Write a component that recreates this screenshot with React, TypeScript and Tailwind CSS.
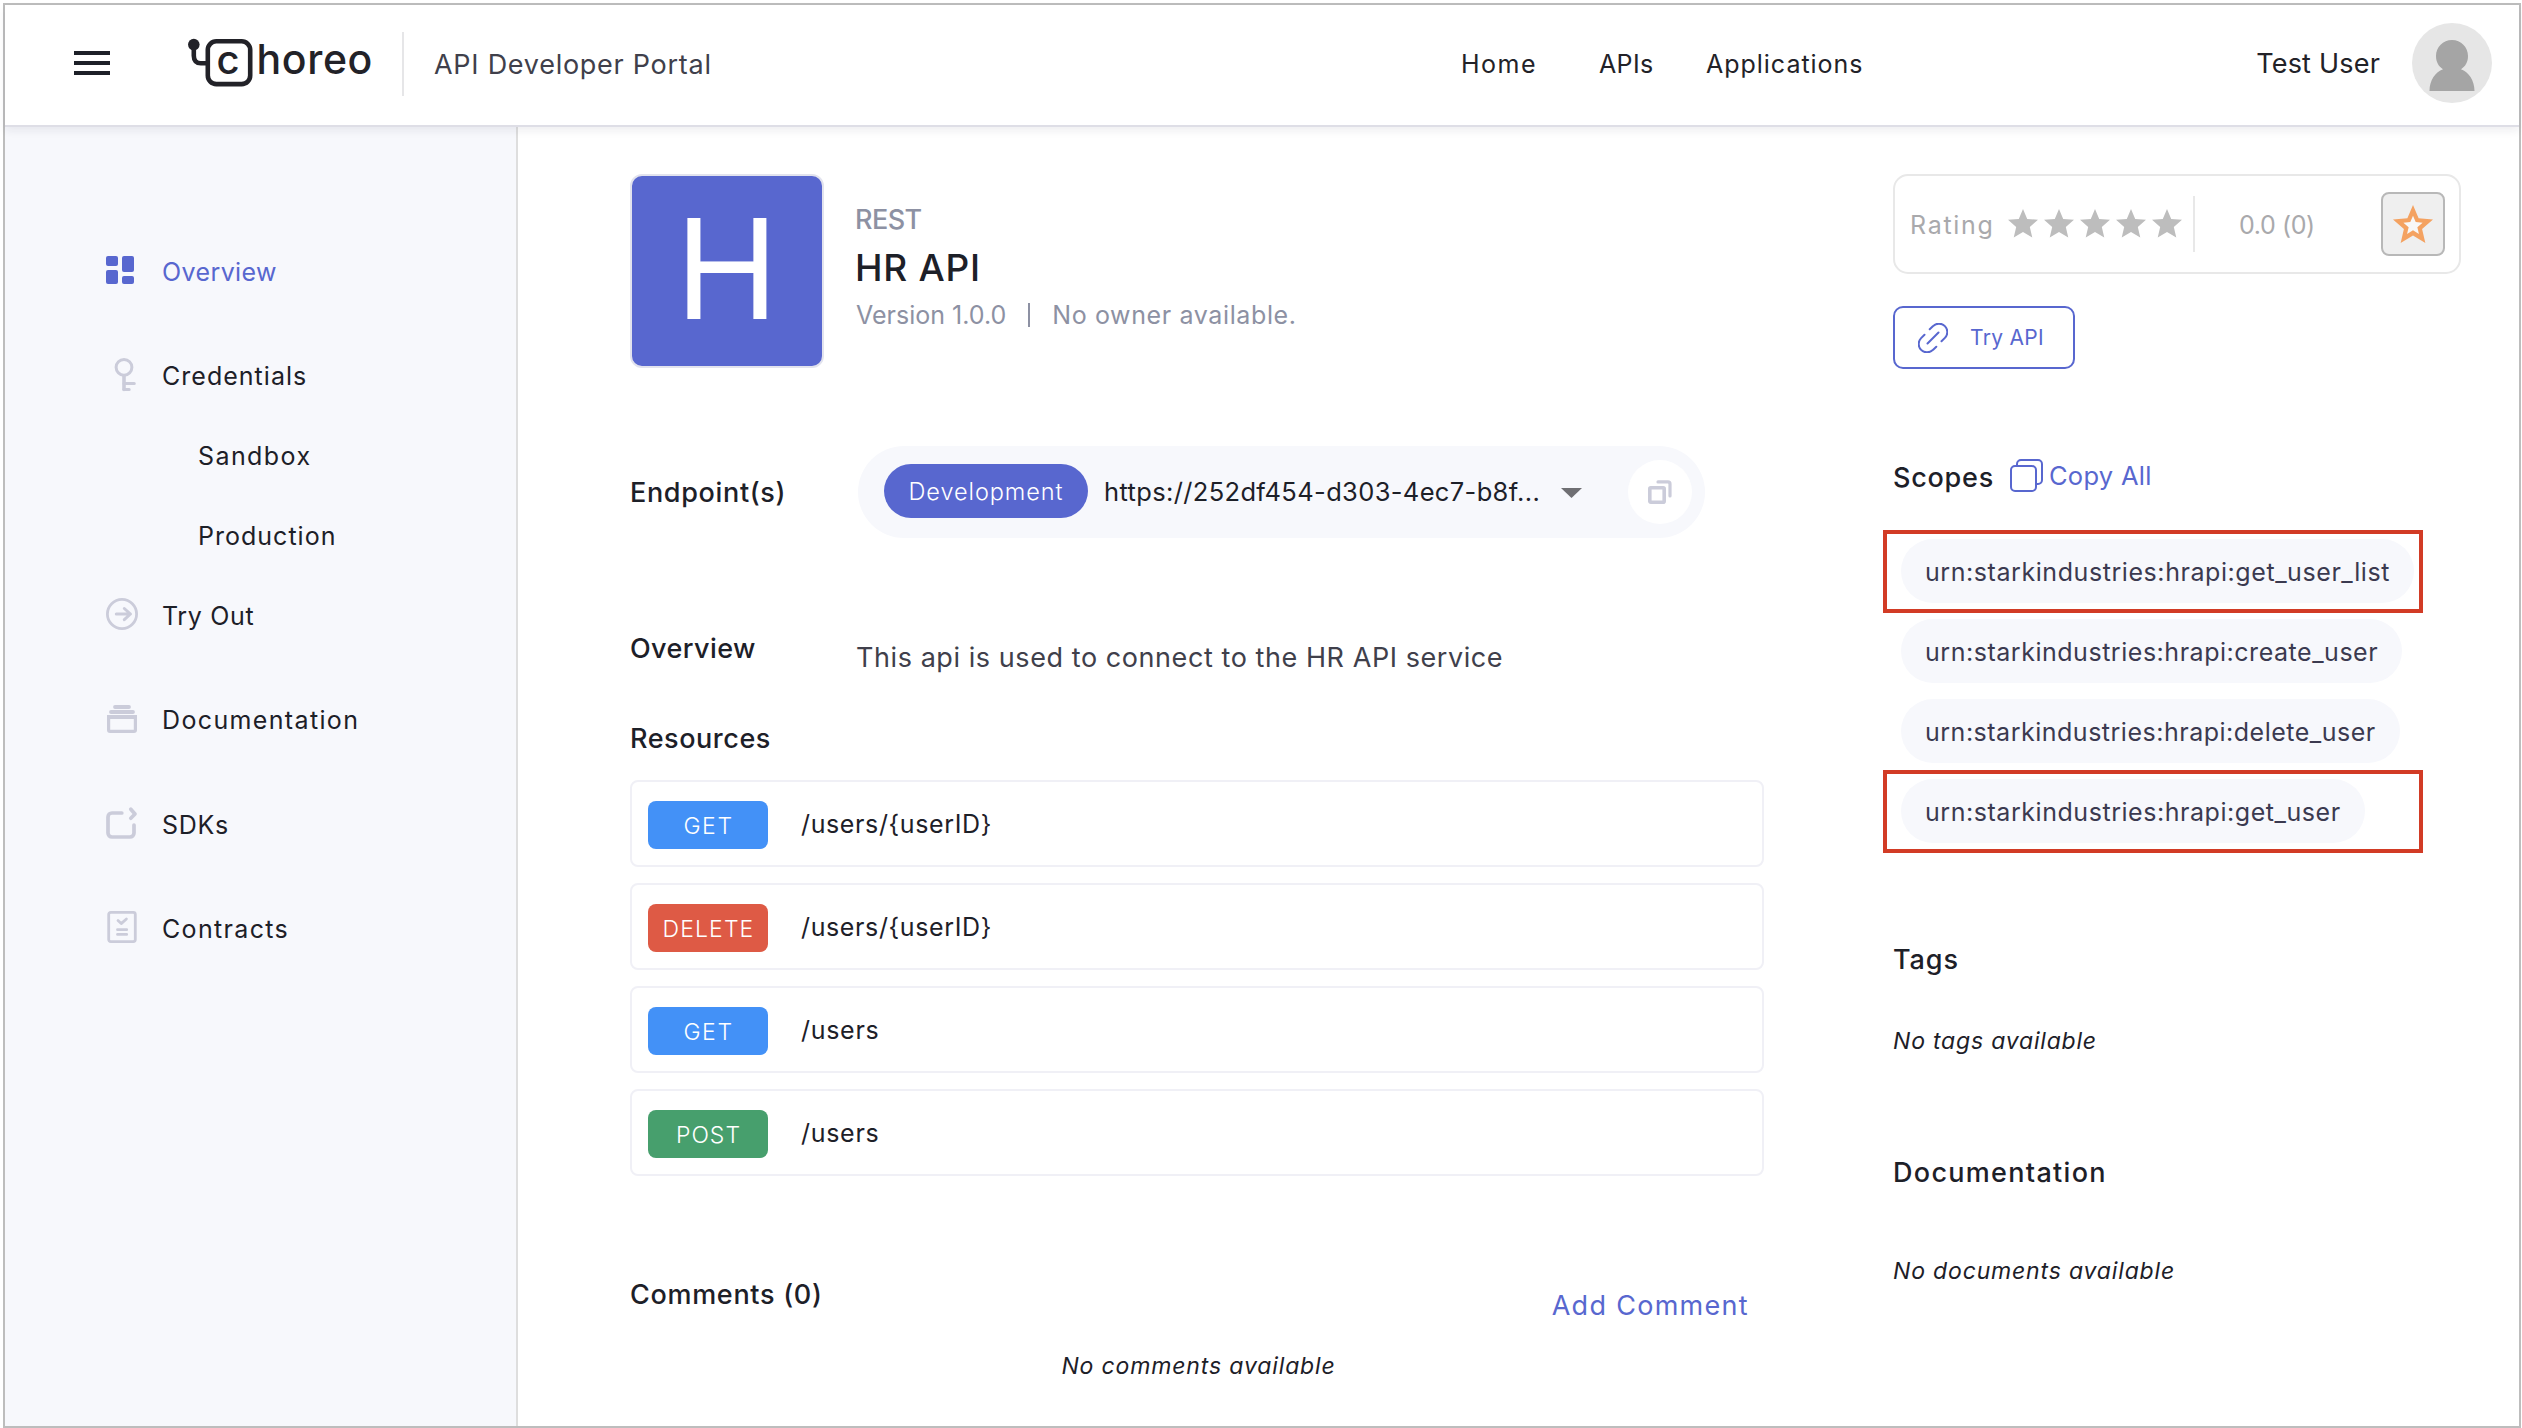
import React from 'react';
import type { ReactNode } from 'react';

const OverviewIcon = () => (
  <svg viewBox="0 0 40 40" className="size-10" fill="#5867cf">
    <rect x="6" y="5" width="12" height="10" rx="2" />
    <rect x="6" y="19" width="12" height="14" rx="2" />
    <rect x="22" y="5" width="12" height="16" rx="2" />
    <rect x="22" y="25" width="12" height="8" rx="2" />
  </svg>
);

const KeyIcon = () => (
  <svg viewBox="0 0 40 40" className="size-10" fill="none" stroke="#cbccda" strokeWidth="3" strokeLinecap="round" strokeLinejoin="round">
    <circle cx="24" cy="12.3" r="7.9" />
    <path d="M24 21v13.5" strokeWidth="3.6" />
    <path d="M24 28.6h10.3M24 34.6h5.2" />
  </svg>
);

const TryOutIcon = () => (
  <svg viewBox="0 0 40 40" className="size-10" fill="none" stroke="#cbccda" strokeWidth="2.8" strokeLinecap="round" strokeLinejoin="round">
    <circle cx="22" cy="19" r="14.6" />
    <path d="M16.3 19h14M24.3 13.5l6.2 5.5l-6.2 5.7" strokeWidth="3" />
  </svg>
);

const DocsIcon = () => (
  <svg viewBox="0 0 40 40" className="size-10" fill="none" stroke="#cbccda" strokeLinecap="round">
    <path d="M15 8h14M11 13h22" strokeWidth="3.8" />
    <path d="M7 16h30v15a3 3 0 0 1-3 3H10a3 3 0 0 1-3-3zM10.2 20v10.8h23.6V20z" fill="#cbccda" fillRule="evenodd" stroke="none" />
  </svg>
);

const SdkIcon = () => (
  <svg viewBox="0 0 40 40" className="size-10" fill="none" stroke="#cbccda" strokeWidth="3.7" strokeLinecap="round" strokeLinejoin="round">
    <path d="M21.8 9H12a4 4 0 0 0-4 4v16a4 4 0 0 0 4 4h18a4 4 0 0 0 4-4v-8" />
    <path d="M30.8 5.2L35 10l-4.2 4.2" />
  </svg>
);

const ContractsIcon = () => (
  <svg viewBox="0 0 40 40" className="size-10" fill="none" stroke="#cbccda" strokeWidth="2.8" strokeLinecap="round" strokeLinejoin="round">
    <rect x="8.7" y="4.4" width="26.6" height="29.2" rx="2" />
    <path d="M18 12.6l3.2 3l5.2-4.6M17.5 21.7h9.2M17.5 26.4h9.2" />
  </svg>
);

const NavItem = ({ icon, className, children }: { icon?: ReactNode; className: string; children: ReactNode }) => (
  <a className={`flex h-20 items-center ${className}`}>
    {icon ? <span className="mr-[22px]">{icon}</span> : null}
    <span className="pt-[3px]">{children}</span>
  </a>
);

const starPath = 'M12 17.27 18.18 21l-1.64-7.03L22 9.24l-7.19-.61L12 2 9.19 8.63 2 9.24l5.46 4.73L5.82 21z';

const resources = [
  { method: 'GET', path: '/users/{userID}', chip: 'bg-[#4391f7] tracking-[1.6px]', text: 'tracking-[0.62px]' },
  { method: 'DELETE', path: '/users/{userID}', chip: 'bg-[#de5a45] tracking-[1.1px]', text: 'tracking-[0.62px]' },
  { method: 'GET', path: '/users', chip: 'bg-[#4391f7] tracking-[1.6px]', text: 'tracking-[0.71px]' },
  { method: 'POST', path: '/users', chip: 'bg-[#479f6d] tracking-[1px]', text: 'tracking-[0.71px]' },
];

const scopes = [
  { name: 'urn:starkindustries:hrapi:get_user_list', spacing: 'tracking-[0.57px]', marked: true },
  { name: 'urn:starkindustries:hrapi:create_user', spacing: 'tracking-[0.53px]', marked: false },
  { name: 'urn:starkindustries:hrapi:delete_user', spacing: 'tracking-[0.51px]', marked: false },
  { name: 'urn:starkindustries:hrapi:get_user', spacing: 'tracking-[0.55px]', marked: true },
];

const Header = () => (
  <header className="relative z-10 flex h-[122px] shrink-0 items-center border-b-2 border-[#dedee6] bg-white pb-[2px] text-[25px] leading-9 text-[#222228] shadow-[0_4px_8px_rgba(30,30,60,0.07)]">
    <div className="mb-[2px] ml-[69px] flex w-9 flex-col gap-[6px]">
      <span className="h-1 bg-[#1d2028]" />
      <span className="h-1 bg-[#1d2028]" />
      <span className="h-1 bg-[#1d2028]" />
    </div>
    <svg viewBox="0 0 192 60" className="ml-[74px] h-[60px] w-48 -translate-y-px" fontFamily="Inter, sans-serif" fill="#222228">
      <circle cx="9.8" cy="11.6" r="5.8" />
      <path d="M9.8 12v10.8c0 4.8 2.6 7.5 7 7.5H23" fill="none" stroke="#222228" strokeWidth="4.6" />
      <rect x="23.8" y="8.3" width="42.4" height="42.8" rx="8.5" fill="none" stroke="#222228" strokeWidth="4.6" />
      <text x="32.6" y="41" fontSize="40" fontWeight="500">c</text>
      <text x="72.6" y="41" fontSize="41" fontWeight="500" letterSpacing="0.6">horeo</text>
    </svg>
    <span className="ml-[26px] h-16 w-[2px] bg-[#e6e6e8]" />
    <h1 className="ml-[30px] w-[1027px] pt-[2px] text-[27px] tracking-[0.73px] text-[#40404b]">API Developer Portal</h1>
    <nav className="flex">
      <a className="w-[138px] tracking-[1.5px]">Home</a>
      <a className="w-[107px] tracking-[0.36px]">APIs</a>
      <a className="tracking-[0.98px]">Applications</a>
    </nav>
    <span className="ml-auto text-[27px] tracking-[0.2px]">Test User</span>
    <svg viewBox="0 0 80 80" className="mr-[27px] ml-8 size-20 -translate-y-px">
      <circle cx="40" cy="40" r="40" fill="#e6e6e6" />
      <path d="M40 17c9 0 16 7 16 16 0 6-2.6 10.500-7 13.200C56.500 49 62.500 57 62.500 68h-45C17.500 57 23.500 49 31 46.200 26.600 43.500 24 39 24 33c0-9 7-16 16-16z" fill="#a5a5a5" />
    </svg>
  </header>
);

const Sidebar = () => (
  <aside className="flex w-[513px] shrink-0 flex-col border-r-2 border-[#dedede] bg-[#f7f8fc] pt-26 pl-[95px] text-[25px] text-[#1d2028]">
    <NavItem icon={<OverviewIcon />} className="tracking-[0.4px] text-[#5867cf]">Overview</NavItem>
    <NavItem icon={<KeyIcon />} className="mt-6 tracking-[1.02px]">Credentials</NavItem>
    <NavItem className="pl-[98px] tracking-[1.42px]">Sandbox</NavItem>
    <NavItem className="pl-[98px] tracking-[1.01px]">Production</NavItem>
    <NavItem icon={<TryOutIcon />} className="tracking-[0.65px]">Try Out</NavItem>
    <NavItem icon={<DocsIcon />} className="mt-6 tracking-[1.36px]">Documentation</NavItem>
    <NavItem icon={<SdkIcon />} className="mt-[25px] tracking-[0.7px]">SDKs</NavItem>
    <NavItem icon={<ContractsIcon />} className="mt-6 tracking-[1.33px]">Contracts</NavItem>
  </aside>
);

const ApiDetails = () => (
  <section className="flex w-[1134px] flex-col leading-9">
    <div className="flex text-[#8d91a3]">
      <div className="flex size-[194px] items-center justify-center rounded-xl border-2 border-[#e2e3ee] bg-[#5867cf] pb-[5px] text-[139px] leading-none text-white">
        H
      </div>
      <div className="pt-[30px] pl-[31px]">
        <div className="text-[27px] leading-8 font-medium -tracking-[0.57px]">REST</div>
        <h2 className="mt-[8px] text-[37px] leading-[48px] font-medium tracking-[0.73px] text-[#1d2028]">HR API</h2>
        <div className="mt-[7px] flex items-center text-[25px] leading-8">
          <span className="ml-px">Version 1.0.0</span>
          <span className="ml-[22px] h-6 w-[2px] bg-[#8d91a3]" />
          <span className="ml-[22px] tracking-[0.62px]">No owner available.</span>
        </div>
      </div>
    </div>

    <div className="mt-[78px] flex h-[92px] items-center text-[#1d2028]">
      <h3 className="w-[228px] pt-[2px] text-[27px] font-medium tracking-[0.66px]">Endpoint(s)</h3>
      <div className="flex h-[92px] w-[847px] items-center rounded-full bg-[#f7f8fc] pl-[26px]">
        <span className="mb-[2px] flex h-[54px] w-[204px] items-center justify-center rounded-full bg-[#5867cf] pt-px text-[23.5px] font-light tracking-[0.92px] text-white">
          Development
        </span>
        <span className="ml-4 w-[457px] text-[25.5px] tracking-[0.35px]">https://252df454-d303-4ec7-b8f...</span>
        <svg viewBox="0 0 21 10" className="h-[10px] w-[21px] translate-y-px" fill="#6f6f73">
          <path d="M0 0h21L10.500 10z" />
        </svg>
        <span className="ml-[46px] flex size-16 items-center justify-center rounded-full bg-white">
          <svg viewBox="0 0 24 24" className="size-6" fill="none" stroke="#cbccda" strokeWidth="3.600" strokeLinecap="round" strokeLinejoin="round">
            <rect x="1.800" y="7.800" width="14.400" height="14.400" rx="1" />
            <path d="M10 1.900h10a2 2 0 0 1 2 2V16" strokeWidth="3.200" />
          </svg>
        </span>
      </div>
    </div>

    <div className="mt-[93px] flex h-[45px]">
      <h3 className="w-[226px] text-[27px] font-medium tracking-[0.41px] text-[#1d2028]">Overview</h3>
      <p className="mt-[9px] text-[27px] tracking-[0.57px] text-[#40404b]">This api is used to connect to the HR API service</p>
    </div>

    <h3 className="mt-[45px] text-[27px] font-medium tracking-[0.55px] text-[#1d2028]">Resources</h3>
    <ul className="mt-[23px] flex flex-col gap-4">
      {resources.map((r, i) => (
        <li key={i} className="flex h-[87px] items-center rounded-lg border-2 border-[#f0f0f6] pl-4 text-[25px] text-[#1d2028]">
          <span className={`mt-[3px] flex h-12 w-[120px] items-center justify-center rounded-lg pt-px pl-px text-[23px] font-light text-white ${r.chip}`}>
            {r.method}
          </span>
          <span className={`ml-[33px] ${r.text}`}>{r.path}</span>
        </li>
      ))}
    </ul>

    <div className="mt-[101px] flex h-[47px] justify-between text-[27px]">
      <h3 className="font-medium tracking-[0.7px] text-[#1d2028]">Comments (0)</h3>
      <a className="mt-[11px] mr-[15px] tracking-[1.3px] text-[#5867cf]">Add Comment</a>
    </div>
    <p className="mt-[24px] pl-[3px] text-center text-[23px] tracking-[0.86px] text-[#1d2028] italic">No comments available</p>
  </section>
);

const ApiAside = () => (
  <section className="ml-[129px] flex flex-col leading-9 text-[#1d2028]">
    <div className="flex h-[100px] w-[568px] items-center rounded-[15px] border-2 border-[#e8e8e8] text-[25px] text-[#a9a9ac]">
      <span className="ml-[15px] w-[95px] pt-[2px] tracking-[1.7px]">Rating</span>
      {[0, 1, 2, 3, 4].map((i) => (
        <svg key={i} viewBox="0 0 24 24" className="size-9" fill="#bdbdbd">
          <path d={starPath} />
        </svg>
      ))}
      <span className="ml-2 h-14 w-[2px] bg-[#e8e8e8]" />
      <span className="ml-11 w-[142px] pt-[2px] -tracking-[0.4px]">0.0 (0)</span>
      <button className="flex size-16 items-center justify-center rounded-lg border-2 border-[#b8b8b8] bg-[#efefef]">
        <svg viewBox="0 0 24 24" className="size-12 translate-y-px">
          <path d={starPath} fill="#f4a261" />
          <path d={starPath} fill="#f8f8f8" transform="translate(12 12.300) scale(0.480) translate(-12 -12.300)" />
        </svg>
      </button>
    </div>

    <button className="mt-8 flex h-[63px] w-[182px] items-center rounded-[10px] border-2 border-[#5867cf] text-[21px] tracking-[0.28px] text-[#5867cf]">
      <svg viewBox="0 0 30 30" className="ml-[23px] size-[30px]" fill="none" stroke="#5867cf" strokeWidth="2" strokeLinecap="round">
        <path d="M11.700 6.300 15.100 3.100A8 8 0 0 1 26.900 14.900L23.500 18.200M18.300 23.700 14.900 26.900A8 8 0 0 1 3.100 15.100L6.500 11.800M9.500 20.500l11-11" />
      </svg>
      <span className="ml-[22px]">Try API</span>
    </button>

    <div className="mt-[90px] flex h-9 items-start">
      <h3 className="mt-px text-[27px] font-medium tracking-[0.75px]">Scopes</h3>
      <svg viewBox="0 0 33 33" className="ml-4 size-[33px]" fill="none" stroke="#5867cf" strokeWidth="2">
        <rect x="1" y="7" width="25" height="25" rx="4" />
        <path d="M7 7V5a4 4 0 0 1 4-4h17a4 4 0 0 1 4 4v16a4 4 0 0 1-4 4h-2" />
      </svg>
      <a className="-mt-px ml-[6px] text-[25.5px] tracking-[0.3px] text-[#5867cf]">Copy All</a>
    </div>

    <ul className="mt-11 flex flex-col gap-4">
      {scopes.map((s) => (
        <li key={s.name} className="relative flex h-16 pl-2">
          <span className={`flex items-center rounded-full bg-[#f7f8fc] px-6 pt-[2px] text-[25px] text-[#3b3a50] ${s.spacing}`}>{s.name}</span>
          {s.marked ? <span className="absolute -top-[9.5px] -left-[10px] h-[83px] w-[540px] border-4 border-[#d23b25]" /> : null}
        </li>
      ))}
    </ul>

    <h3 className="mt-[99px] text-[27px] font-medium tracking-[0.9px]">Tags</h3>
    <p className="mt-[45px] text-[23px] tracking-[0.8px] italic">No tags available</p>
    <h3 className="mt-[96px] text-[27px] font-medium tracking-[1.3px]">Documentation</h3>
    <p className="mt-[62px] text-[23px] tracking-[0.83px] italic">No documents available</p>
  </section>
);

export default function App() {
  return (
    <div className="h-[1428px] w-[2522px] overflow-hidden bg-white pt-[3px] pr-px pl-[3px] font-['Inter',sans-serif]">
      <div className="flex h-full flex-col border-2 border-[#bdbdbd]">
        <Header />
        <div className="flex flex-1">
          <Sidebar />
          <main className="flex pt-[47px] pl-[112px]">
            <ApiDetails />
            <ApiAside />
          </main>
        </div>
      </div>
    </div>
  );
}
